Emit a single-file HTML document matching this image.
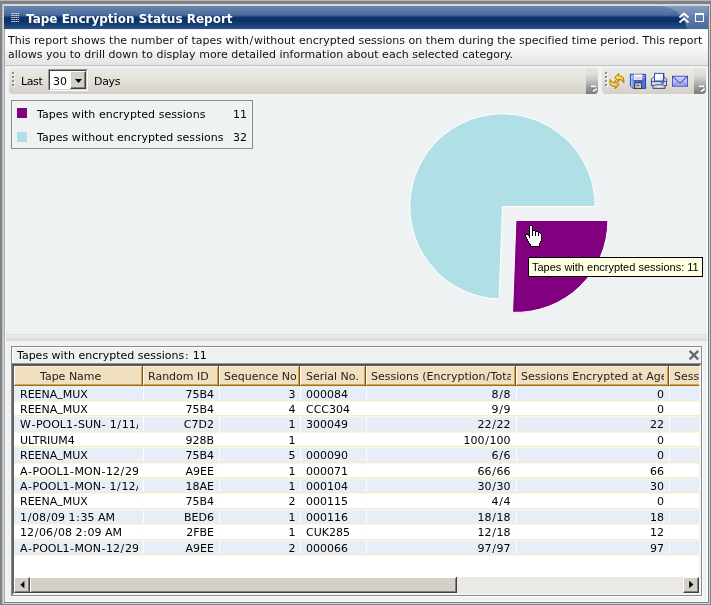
<!DOCTYPE html>
<html>
<head>
<meta charset="utf-8">
<title>Tape Encryption Status Report</title>
<style>
html,body{margin:0;padding:0;}
body{width:711px;height:605px;overflow:hidden;position:relative;background:#7e8186;font-family:"DejaVu Sans","Liberation Sans",sans-serif;font-size:11px;color:#000;}
.abs{position:absolute;}
.t,#titletext,#desctext,.lbl,.v,.lt,.ln,#tip span,#ptitle,.ht,.c{will-change:transform;}
#topline{left:0;top:0;width:711px;height:1px;background:#b5b7b9;}
#frame{left:3px;top:4px;width:707px;height:600px;background:#d6d5d2;}
#frame2{left:4px;top:6px;width:705px;height:597px;background:#777b81;}
#inner{left:4px;top:6px;width:704px;height:596px;background:#eef2f3;overflow:hidden;}
/* title */
#title{left:0;top:0;width:704px;height:23px;background:linear-gradient(#6886b0 0px,#4a6c9d 8.9px,#0c346b 11.6px,#0a3269 15px,#2b5287 23px);}
#titletext{left:21.5px;top:5px;font-weight:bold;font-size:12px;color:#fff;white-space:nowrap;line-height:16px;}
/* description */
#desc{left:0;top:24px;width:704px;height:35px;border-radius:4px 4px 0 0;background:linear-gradient(#ffffff 0,#fbfbfb 14px,#e4e4e4 35px);}
#desctext{left:3.9px;top:4.1px;line-height:13.7px;white-space:nowrap;color:#111;letter-spacing:0.018px;}
/* toolbars */
.tb{top:62px;height:26px;border-radius:4px;background:linear-gradient(#eceae4 0,#e3e1da 12px,#d3d0c7 26px);}
#tb1{left:5px;width:589px;}
#tb2{left:598px;width:104px;}
.ovf{top:0;right:0;width:12px;height:26px;border-radius:0 2px 4px 0;background:linear-gradient(#e6e4de 0,#e0ded8 6px,#d0cfcb 10px,#b5b5b3 15px,#979796 20px,#7b7b7b 26px);}
.lbl{top:7px;line-height:14px;white-space:nowrap;}
#combo{left:39px;top:1px;width:40px;height:22px;box-sizing:border-box;border:1px solid;border-color:#9c9c9c #fff #fff #9c9c9c;background:#fff;}
#combo .in{left:0;top:0;width:38px;height:20px;box-sizing:border-box;border:1px solid;border-color:#404040 #d4d0c8 #d4d0c8 #404040;background:#fff;}
#combo .v{left:3.4px;top:4px;line-height:14px;}
#combo .btn{left:20px;top:0;width:16px;height:18px;box-sizing:border-box;background:#d4d0c8;border:1px solid;border-color:#fff #404040 #404040 #fff;box-shadow:inset -1px -1px 0 #808080;}
/* chart area */
#legend{left:7px;top:94px;width:242px;height:49px;box-sizing:border-box;border:1px solid #8a8a8a;}
.sw{left:5px;width:10px;height:10px;}
.lt{left:25px;white-space:nowrap;line-height:14px;letter-spacing:0.04px;}
.ln{left:221px;white-space:nowrap;line-height:14px;}
#tip{left:524px;top:251px;width:175px;height:20px;box-sizing:border-box;border:1px solid #000;background:#ffffe1;font-family:"Liberation Sans",sans-serif;font-size:11px;line-height:14px;white-space:nowrap;}
/* splitter */
#split{left:1px;top:328px;width:703px;height:7px;background:linear-gradient(#dcdcdc 0,#e9e9e9 1.5px,#e4e4e4 4px,#d6d6d6 7px);}
#lower{left:0;top:335px;width:704px;height:261px;background:#eef2f3;}
#panel{left:7px;top:340px;width:691px;height:250px;box-sizing:border-box;border:1px solid #8c8c8c;background:#eef2f3;box-shadow:inset 1px 1px 0 #fff, 1px 1px 0 #fff;}
#ptitle{left:5px;top:2px;line-height:14px;white-space:nowrap;}
#grid{left:0;top:17px;width:689px;height:231px;box-sizing:border-box;border:2px solid;border-color:#565656 #f4f4f4 #f4f4f4 #626262;background:#fff;overflow:hidden;box-shadow:0 -1px 0 #949494;}
.hc{top:0;height:20px;box-sizing:border-box;background:#f1e0c0;border-bottom:1px solid #947030;border-right:1px solid #735214;box-shadow:inset 1px 0 0 #fff, inset 0 1px 0 #fbf3e0, inset -1px 0 0 #d9a444, inset 0 -1px 0 #d9a23c;line-height:14px;white-space:nowrap;overflow:hidden;color:#222;}
.row{left:0;width:685px;height:15px;}
.vs{top:0;width:1px;height:100%;background:#fdfdfd;}
.ht{top:3.5px;line-height:14px;overflow:hidden;white-space:nowrap;height:14px;}
.row.a{background:#e8eef7;}
.row .ln2{left:0;bottom:0;width:685px;height:2px;background:linear-gradient(#f5eccd 0,#f5eccd 1px,#faf5e5 1px,#faf5e5 2px);}
.c{top:1.6px;line-height:14px;white-space:nowrap;overflow:hidden;height:17px;}
.r{text-align:right;}
i.us{font-style:normal;position:relative;top:-1.6px;}
i.w1{font-style:normal;padding:0 0.5px;}
i.w2{font-style:normal;padding:0 0.65px;}
/* scrollbar */
#sb{left:0;top:211px;width:685px;height:16px;background:#ebe9e4;}
#sbthumb{left:16px;top:0;width:427px;height:16px;background:#d4d0c8;box-shadow:inset -1px -1px 0 #404040, inset 1px 1px 0 #fff, inset -2px -2px 0 #808080;}
.sbb{top:0;width:16px;height:16px;box-sizing:border-box;background:#d4d0c8;border:1px solid;border-color:#fff #404040 #404040 #fff;box-shadow:inset -1px -1px 0 #808080;}
</style>
</head>
<body>
<div class="abs" id="topline"></div>
<div class="abs" id="frame"></div>
<div class="abs" id="frame2"></div>
<div class="abs" style="left:2px;top:4px;width:1px;height:600px;background:#b9babb"></div>
<div class="abs" id="inner">
  <div class="abs" id="title">
    <svg class="abs" style="left:0;top:0" width="704" height="23" viewBox="0 0 704 23">
      <defs>
        <linearGradient id="gl" x1="0" y1="0" x2="0" y2="1"><stop offset="0" stop-color="#869fc1"/><stop offset="1" stop-color="#496b9c"/></linearGradient>
      </defs>
      <path d="M655 0 C672 1 680 10 683 23 L704 23 L704 0 Z" fill="url(#gl)" opacity="0.9"/>
      <g fill="#c9d5e9"><rect x="7.2" y="7" width="1.6" height="1"/><rect x="9.3" y="7" width="1.6" height="1"/><rect x="11.4" y="7" width="1.6" height="1"/><rect x="13.5" y="7" width="1.6" height="1"/><rect x="7.2" y="9" width="1.6" height="1"/><rect x="9.3" y="9" width="1.6" height="1"/><rect x="11.4" y="9" width="1.6" height="1"/><rect x="13.5" y="9" width="1.6" height="1"/><rect x="7.2" y="11" width="1.6" height="1"/><rect x="9.3" y="11" width="1.6" height="1"/><rect x="11.4" y="11" width="1.6" height="1"/><rect x="13.5" y="11" width="1.6" height="1"/><rect x="7.2" y="13" width="1.6" height="1"/><rect x="9.3" y="13" width="1.6" height="1"/><rect x="11.4" y="13" width="1.6" height="1"/><rect x="13.5" y="13" width="1.6" height="1"/><rect x="7.2" y="15" width="1.6" height="1"/><rect x="9.3" y="15" width="1.6" height="1"/><rect x="11.4" y="15" width="1.6" height="1"/><rect x="13.5" y="15" width="1.6" height="1"/></g>
      <g stroke="#fff" stroke-width="1.8" fill="none" stroke-linejoin="miter">
        <path d="M675.5 11.5 L680 7.5 L684.5 11.5"/>
        <path d="M675.5 16.5 L680 12.5 L684.5 16.5"/>
      </g>
      <rect x="691.5" y="7.5" width="8" height="8" fill="none" stroke="#fff" stroke-width="1"/>
      <rect x="691" y="7" width="9" height="2" fill="#fff"/>
    </svg>
    <div class="abs" id="titletext">Tape Encryption Status Report</div>
  </div>
  <div class="abs" id="desc">
    <div class="abs" id="desctext">This report shows the number of tapes with<i class="w2">/</i>without encrypted sessions on them during the specified time period. This report<br>allows you to drill down to display more detailed information about each selected category.</div>
  </div>
  <div class="abs" style="left:0;top:59px;width:704px;height:1px;background:#c6c6c6"></div>

  <div class="abs tb" id="tb1">
    <svg class="abs" style="left:3px;top:4px" width="4" height="16"><rect x="1" y="1" width="2" height="2" fill="#fff"/><rect x="0" y="0" width="2" height="2" fill="#8d8d89"/><rect x="1" y="5" width="2" height="2" fill="#fff"/><rect x="0" y="4" width="2" height="2" fill="#8d8d89"/><rect x="1" y="9" width="2" height="2" fill="#fff"/><rect x="0" y="8" width="2" height="2" fill="#8d8d89"/><rect x="1" y="13" width="2" height="2" fill="#fff"/><rect x="0" y="12" width="2" height="2" fill="#8d8d89"/></svg>
    <div class="abs lbl" style="left:12.3px;letter-spacing:-0.4px">Last</div>
    <div class="abs" id="combo"><div class="abs in"><div class="abs v">30</div><div class="abs btn"><svg class="abs" style="left:4px;top:7px" width="7" height="4"><path d="M0 0h7L3.5 4z" fill="#000"/></svg></div></div></div>
    <div class="abs lbl" style="left:85px;letter-spacing:-0.3px">Days</div>
    <div class="abs ovf"><svg class="abs" style="left:0.9px;top:0" width="12" height="26"><rect x="4" y="17.6" width="5.2" height="1.4" fill="#fff"/><path d="M5.9 23.2 L9.8 20.9" stroke="#fff" stroke-width="1.6" fill="none"/><path d="M4.2 20.2 h3.6 l-2 2z" fill="#767676"/></svg></div>
  </div>
  <div class="abs tb" id="tb2">
    <svg class="abs" style="left:0;top:0" width="105" height="26" viewBox="602 68 105 26">
      <defs>
        <linearGradient id="gold" x1="0" y1="0" x2="1" y2="1"><stop offset="0" stop-color="#fffce0"/><stop offset="0.4" stop-color="#ffe468"/><stop offset="1" stop-color="#eeae1c"/></linearGradient>
        <linearGradient id="fblue" x1="0" y1="0" x2="1" y2="0"><stop offset="0" stop-color="#90acf2"/><stop offset="0.5" stop-color="#6485e2"/><stop offset="1" stop-color="#4a6dd6"/></linearGradient>
        <linearGradient id="flabel" x1="0" y1="0" x2="0" y2="1"><stop offset="0" stop-color="#fafafa"/><stop offset="1" stop-color="#c4c6c8"/></linearGradient>
        <linearGradient id="fshut" x1="0" y1="0" x2="1" y2="1"><stop offset="0" stop-color="#9a9a9a"/><stop offset="1" stop-color="#d6d6d6"/></linearGradient>
        <linearGradient id="paper" x1="0" y1="0" x2="1" y2="1"><stop offset="0" stop-color="#ffffff"/><stop offset="0.55" stop-color="#f4f8ff"/><stop offset="1" stop-color="#b8d4f8"/></linearGradient>
        <linearGradient id="pbody" x1="0" y1="0" x2="0" y2="1"><stop offset="0" stop-color="#f4f4fb"/><stop offset="1" stop-color="#c6c6de"/></linearGradient>
        <linearGradient id="mail" x1="0" y1="0" x2="0" y2="1"><stop offset="0" stop-color="#d4d4ff"/><stop offset="1" stop-color="#a4a4f6"/></linearGradient>
      </defs>
      <!-- refresh -->
      <g stroke="#bd8408" stroke-width="1.1" stroke-linejoin="round" fill="url(#gold)">
        <path d="M615 77.6 L618.7 73.7 L618.7 76 C621.4 76 623.8 77 623.8 80 L623.8 82.7 C622.8 80.4 621.4 79.4 618.7 79.4 L618.7 81.6 Z"/>
        <path d="M618.9 84.6 L615.2 88.5 L615.2 86.2 C612.5 86.2 610.1 85.2 610.1 82.2 L610.1 79.5 C611.1 81.8 612.5 82.8 615.2 82.8 L615.2 80.6 Z"/>
      </g>
      <!-- save -->
      <path d="M630.4 74.3 H645.6 V88.4 H633.2 L630.4 86 Z" fill="url(#fblue)" stroke="#1c42b4" stroke-width="1"/>
      <path d="M631.4 87 V75.3 H644.6" fill="none" stroke="#a9bdf5" stroke-width="0.9"/>
      <rect x="633.6" y="79.6" width="9" height="1.8" fill="#2a50c2"/>
      <rect x="634.3" y="74.9" width="7.6" height="4.8" fill="url(#flabel)" stroke="#fff" stroke-width="0.7"/>
      <rect x="634.6" y="82.6" width="7" height="6" fill="url(#fshut)" stroke="#343434" stroke-width="0.9"/>
      <rect x="636.9" y="84.9" width="2.2" height="1.2" fill="#3c6ae0"/>
      <rect x="631.7" y="77" width="1" height="1" fill="#e8eeff"/><rect x="643.3" y="77" width="1" height="1" fill="#e8eeff"/>
      <!-- printer -->
      <path d="M651.4 79.2 L653.4 77.2 H664.6 L666.6 79.2 V85.6 H665 V88.4 H653 V85.6 H651.4 Z" fill="url(#pbody)" stroke="#42427e" stroke-width="1"/>
      <path d="M651.6 81.6 H666.4" stroke="#42427e" stroke-width="1"/>
      <path d="M653.2 85.6 C655 84.4 663 84.4 664.8 85.6" stroke="#42427e" stroke-width="0.9" fill="none"/>
      <rect x="657" y="86.2" width="4" height="1" fill="#fff"/>
      <rect x="654.5" y="73.4" width="9.2" height="7.6" fill="url(#paper)" stroke="#2a56c8" stroke-width="1"/>
      <path d="M663.7 73.4 V81" stroke="#34349c" stroke-width="1"/>
      <rect x="660.8" y="81.9" width="1.7" height="2" fill="#3cc01c"/><rect x="662.5" y="81.9" width="1.4" height="2" fill="#2a62e0"/>
      <!-- mail -->
      <rect x="672.5" y="76.3" width="15" height="9.9" fill="url(#mail)" stroke="#4e4ed2" stroke-width="1"/>
      <path d="M673.3 86 L677.6 82 M687 86 L682.7 82" stroke="#4c86e6" stroke-width="0.9" fill="none"/>
      <path d="M672.8 76.4 L680 83.4 L687.2 76.4" stroke="#30305e" stroke-width="1" fill="none"/>
    </svg>
    <svg class="abs" style="left:3px;top:4px" width="4" height="16"><rect x="1" y="1" width="2" height="2" fill="#fff"/><rect x="0" y="0" width="2" height="2" fill="#8d8d89"/><rect x="1" y="5" width="2" height="2" fill="#fff"/><rect x="0" y="4" width="2" height="2" fill="#8d8d89"/><rect x="1" y="9" width="2" height="2" fill="#fff"/><rect x="0" y="8" width="2" height="2" fill="#8d8d89"/><rect x="1" y="13" width="2" height="2" fill="#fff"/><rect x="0" y="12" width="2" height="2" fill="#8d8d89"/></svg>
    <div class="abs ovf"><svg class="abs" style="left:0.9px;top:0" width="12" height="26"><rect x="4" y="17.6" width="5.2" height="1.4" fill="#fff"/><path d="M5.9 23.2 L9.8 20.9" stroke="#fff" stroke-width="1.6" fill="none"/><path d="M4.2 20.2 h3.6 l-2 2z" fill="#767676"/></svg></div>
  </div>

  <div class="abs" id="legend">
    <div class="abs sw" style="top:7px;background:#800080"></div>
    <div class="abs lt" style="top:7px">Tapes with encrypted sessions</div>
    <div class="abs ln" style="top:7px">11</div>
    <div class="abs sw" style="top:31px;background:#b0e0e6"></div>
    <div class="abs lt" style="top:30px">Tapes without encrypted sessions</div>
    <div class="abs ln" style="top:30px">32</div>
  </div>

  <svg class="abs" style="left:0;top:88px" width="704" height="240" viewBox="4 94 704 240">
    <path id="pb" d="M502.5 206.5 L595.2 206.5 A92.7 92.7 0 1 0 499.11 299.14 Z" fill="#b0e0e6" stroke="#fff" stroke-width="1"/>
    <path id="pp" d="M515.9 220.4 L607.9 220.4 A92 92 0 0 1 512.54 312.34 Z" fill="#800080" stroke="#fff" stroke-width="1"/>
  </svg>
  <svg class="abs" id="cursor" style="left:521px;top:219px" width="17" height="22" shape-rendering="crispEdges"><rect x="5" y="0" width="2" height="1" fill="#000"/><rect x="4" y="1" width="1" height="1" fill="#000"/><rect x="5" y="1" width="2" height="1" fill="#fff"/><rect x="7" y="1" width="1" height="1" fill="#000"/><rect x="4" y="2" width="1" height="1" fill="#000"/><rect x="5" y="2" width="2" height="1" fill="#fff"/><rect x="7" y="2" width="1" height="1" fill="#000"/><rect x="4" y="3" width="1" height="1" fill="#000"/><rect x="5" y="3" width="2" height="1" fill="#fff"/><rect x="7" y="3" width="1" height="1" fill="#000"/><rect x="4" y="4" width="1" height="1" fill="#000"/><rect x="5" y="4" width="2" height="1" fill="#fff"/><rect x="7" y="4" width="1" height="1" fill="#000"/><rect x="4" y="5" width="1" height="1" fill="#000"/><rect x="5" y="5" width="2" height="1" fill="#fff"/><rect x="7" y="5" width="3" height="1" fill="#000"/><rect x="4" y="6" width="1" height="1" fill="#000"/><rect x="5" y="6" width="2" height="1" fill="#fff"/><rect x="7" y="6" width="1" height="1" fill="#000"/><rect x="8" y="6" width="2" height="1" fill="#fff"/><rect x="10" y="6" width="3" height="1" fill="#000"/><rect x="4" y="7" width="1" height="1" fill="#000"/><rect x="5" y="7" width="2" height="1" fill="#fff"/><rect x="7" y="7" width="1" height="1" fill="#000"/><rect x="8" y="7" width="2" height="1" fill="#fff"/><rect x="10" y="7" width="1" height="1" fill="#000"/><rect x="11" y="7" width="2" height="1" fill="#fff"/><rect x="13" y="7" width="2" height="1" fill="#000"/><rect x="4" y="8" width="1" height="1" fill="#000"/><rect x="5" y="8" width="2" height="1" fill="#fff"/><rect x="7" y="8" width="1" height="1" fill="#000"/><rect x="8" y="8" width="2" height="1" fill="#fff"/><rect x="10" y="8" width="1" height="1" fill="#000"/><rect x="11" y="8" width="2" height="1" fill="#fff"/><rect x="13" y="8" width="1" height="1" fill="#000"/><rect x="14" y="8" width="1" height="1" fill="#fff"/><rect x="15" y="8" width="1" height="1" fill="#000"/><rect x="0" y="9" width="3" height="1" fill="#000"/><rect x="4" y="9" width="1" height="1" fill="#000"/><rect x="5" y="9" width="2" height="1" fill="#fff"/><rect x="7" y="9" width="1" height="1" fill="#000"/><rect x="8" y="9" width="2" height="1" fill="#fff"/><rect x="10" y="9" width="1" height="1" fill="#000"/><rect x="11" y="9" width="2" height="1" fill="#fff"/><rect x="13" y="9" width="1" height="1" fill="#000"/><rect x="14" y="9" width="2" height="1" fill="#fff"/><rect x="16" y="9" width="1" height="1" fill="#000"/><rect x="0" y="10" width="1" height="1" fill="#000"/><rect x="1" y="10" width="2" height="1" fill="#fff"/><rect x="3" y="10" width="2" height="1" fill="#000"/><rect x="5" y="10" width="2" height="1" fill="#fff"/><rect x="7" y="10" width="1" height="1" fill="#000"/><rect x="8" y="10" width="2" height="1" fill="#fff"/><rect x="10" y="10" width="1" height="1" fill="#000"/><rect x="11" y="10" width="2" height="1" fill="#fff"/><rect x="13" y="10" width="1" height="1" fill="#000"/><rect x="14" y="10" width="2" height="1" fill="#fff"/><rect x="16" y="10" width="1" height="1" fill="#000"/><rect x="0" y="11" width="1" height="1" fill="#000"/><rect x="1" y="11" width="3" height="1" fill="#fff"/><rect x="4" y="11" width="1" height="1" fill="#000"/><rect x="5" y="11" width="11" height="1" fill="#fff"/><rect x="16" y="11" width="1" height="1" fill="#000"/><rect x="1" y="12" width="1" height="1" fill="#000"/><rect x="2" y="12" width="2" height="1" fill="#fff"/><rect x="4" y="12" width="1" height="1" fill="#000"/><rect x="5" y="12" width="11" height="1" fill="#fff"/><rect x="16" y="12" width="1" height="1" fill="#000"/><rect x="1" y="13" width="1" height="1" fill="#000"/><rect x="2" y="13" width="14" height="1" fill="#fff"/><rect x="16" y="13" width="1" height="1" fill="#000"/><rect x="2" y="14" width="1" height="1" fill="#000"/><rect x="3" y="14" width="13" height="1" fill="#fff"/><rect x="16" y="14" width="1" height="1" fill="#000"/><rect x="2" y="15" width="1" height="1" fill="#000"/><rect x="3" y="15" width="13" height="1" fill="#fff"/><rect x="16" y="15" width="1" height="1" fill="#000"/><rect x="3" y="16" width="1" height="1" fill="#000"/><rect x="4" y="16" width="11" height="1" fill="#fff"/><rect x="15" y="16" width="1" height="1" fill="#000"/><rect x="3" y="17" width="1" height="1" fill="#000"/><rect x="4" y="17" width="11" height="1" fill="#fff"/><rect x="15" y="17" width="1" height="1" fill="#000"/><rect x="4" y="18" width="1" height="1" fill="#000"/><rect x="5" y="18" width="9" height="1" fill="#fff"/><rect x="14" y="18" width="1" height="1" fill="#000"/><rect x="5" y="19" width="1" height="1" fill="#000"/><rect x="6" y="19" width="8" height="1" fill="#fff"/><rect x="14" y="19" width="1" height="1" fill="#000"/><rect x="5" y="20" width="1" height="1" fill="#000"/><rect x="6" y="20" width="8" height="1" fill="#fff"/><rect x="14" y="20" width="1" height="1" fill="#000"/><rect x="5" y="21" width="10" height="1" fill="#000"/></svg>
  <div class="abs" id="tip"><span class="abs" style="left:3.2px;top:2px">Tapes with encrypted sessions: 11</span></div>

  <div class="abs" id="split"></div>
  <div class="abs" id="lower"></div>
  <div class="abs" id="panel">
    <svg class="abs" style="left:676px;top:2.2px" width="12" height="12" viewBox="0 0 12 12"><path d="M1.6 1.9 L10.2 10.4 M10.2 1.9 L1.6 10.4" stroke="#6a6a6a" stroke-width="2.3" fill="none"/></svg>
    <div class="abs" id="ptitle">Tapes with encrypted sessions<i class="w2">:</i> 11</div>
    <div class="abs" id="grid">
<!--ROWS-->
      <div class="abs hc" style="left:0px;width:129px"><span class="abs ht" style="left:26px;width:98px">Tape Name</span></div>
      <div class="abs hc" style="left:129px;width:76px"><span class="abs ht" style="left:5.2px;width:65px">Random ID</span></div>
      <div class="abs hc" style="left:205px;width:81px"><span class="abs ht" style="left:5px;width:73px">Sequence No.</span></div>
      <div class="abs hc" style="left:286px;width:66px"><span class="abs ht" style="left:5.5px;width:55px">Serial No.</span></div>
      <div class="abs hc" style="left:352px;width:150px"><span class="abs ht" style="left:4.5px;width:140px">Sessions (Encryption<i class="w2">/</i>Total)</span></div>
      <div class="abs hc" style="left:502px;width:153px"><span class="abs ht" style="left:5px;width:143px">Sessions Encrypted at Agent</span></div>
      <div class="abs hc" style="left:655px;width:160px"><span class="abs ht" style="left:5px;width:150px">Sessions Encrypted at Server</span></div>
      <div class="abs row a" style="top:20px;height:16px"><i class="abs vs" style="left:129px"></i><i class="abs vs" style="left:205px"></i><i class="abs vs" style="left:286px"></i><i class="abs vs" style="left:352px"></i><i class="abs vs" style="left:502px"></i><i class="abs vs" style="left:655px"></i><span class="abs c k" style="top:1.6px;left:6px;width:118px">REENA<i class="us">_</i>MUX</span><span class="abs c r" style="top:1.6px;left:129px;width:71px">75B4</span><span class="abs c r" style="top:1.6px;left:205px;width:76.5px">3</span><span class="abs c k" style="top:1.6px;left:292px;width:55px">000084</span><span class="abs c r" style="top:1.6px;left:352px;width:144.5px">8<i class="w2">/</i>8</span><span class="abs c r" style="top:1.6px;left:502px;width:148px">0</span><i class="abs ln2"></i></div>
      <div class="abs row" style="top:36px;height:15px"><i class="abs vs" style="left:129px"></i><i class="abs vs" style="left:205px"></i><i class="abs vs" style="left:286px"></i><i class="abs vs" style="left:352px"></i><i class="abs vs" style="left:502px"></i><i class="abs vs" style="left:655px"></i><span class="abs c k" style="top:1.0px;left:6px;width:118px">REENA<i class="us">_</i>MUX</span><span class="abs c r" style="top:1.0px;left:129px;width:71px">75B4</span><span class="abs c r" style="top:1.0px;left:205px;width:76.5px">4</span><span class="abs c k" style="top:1.0px;left:292px;width:55px">CCC304</span><span class="abs c r" style="top:1.0px;left:352px;width:144.5px">9<i class="w2">/</i>9</span><span class="abs c r" style="top:1.0px;left:502px;width:148px">0</span><i class="abs ln2"></i></div>
      <div class="abs row a" style="top:51px;height:16px"><i class="abs vs" style="left:129px"></i><i class="abs vs" style="left:205px"></i><i class="abs vs" style="left:286px"></i><i class="abs vs" style="left:352px"></i><i class="abs vs" style="left:502px"></i><i class="abs vs" style="left:655px"></i><span class="abs c k" style="top:1.4px;left:6px;width:118px">W<i class="w1">-</i>POOL1<i class="w1">-</i>SUN<i class="w1">-</i> 1<i class="w2">/</i>11<i class="w2">/</i>09</span><span class="abs c r" style="top:1.4px;left:129px;width:71px">C7D2</span><span class="abs c r" style="top:1.4px;left:205px;width:76.5px">1</span><span class="abs c k" style="top:1.4px;left:292px;width:55px">300049</span><span class="abs c r" style="top:1.4px;left:352px;width:144.5px">22<i class="w2">/</i>22</span><span class="abs c r" style="top:1.4px;left:502px;width:148px">22</span><i class="abs ln2"></i></div>
      <div class="abs row" style="top:67px;height:15px"><i class="abs vs" style="left:129px"></i><i class="abs vs" style="left:205px"></i><i class="abs vs" style="left:286px"></i><i class="abs vs" style="left:352px"></i><i class="abs vs" style="left:502px"></i><i class="abs vs" style="left:655px"></i><span class="abs c k" style="top:0.8px;left:6px;width:118px">ULTRIUM4</span><span class="abs c r" style="top:0.8px;left:129px;width:71px">928B</span><span class="abs c r" style="top:0.8px;left:205px;width:76.5px">1</span><span class="abs c k" style="top:0.8px;left:292px;width:55px"></span><span class="abs c r" style="top:0.8px;left:352px;width:144.5px">100<i class="w2">/</i>100</span><span class="abs c r" style="top:0.8px;left:502px;width:148px">0</span><i class="abs ln2"></i></div>
      <div class="abs row a" style="top:82px;height:16px"><i class="abs vs" style="left:129px"></i><i class="abs vs" style="left:205px"></i><i class="abs vs" style="left:286px"></i><i class="abs vs" style="left:352px"></i><i class="abs vs" style="left:502px"></i><i class="abs vs" style="left:655px"></i><span class="abs c k" style="top:1.2px;left:6px;width:118px">REENA<i class="us">_</i>MUX</span><span class="abs c r" style="top:1.2px;left:129px;width:71px">75B4</span><span class="abs c r" style="top:1.2px;left:205px;width:76.5px">5</span><span class="abs c k" style="top:1.2px;left:292px;width:55px">000090</span><span class="abs c r" style="top:1.2px;left:352px;width:144.5px">6<i class="w2">/</i>6</span><span class="abs c r" style="top:1.2px;left:502px;width:148px">0</span><i class="abs ln2"></i></div>
      <div class="abs row" style="top:98px;height:15px"><i class="abs vs" style="left:129px"></i><i class="abs vs" style="left:205px"></i><i class="abs vs" style="left:286px"></i><i class="abs vs" style="left:352px"></i><i class="abs vs" style="left:502px"></i><i class="abs vs" style="left:655px"></i><span class="abs c k" style="top:0.6px;left:6px;width:118px">A<i class="w1">-</i>POOL1<i class="w1">-</i>MON<i class="w1">-</i>12<i class="w2">/</i>29<i class="w2">/</i>08</span><span class="abs c r" style="top:0.6px;left:129px;width:71px">A9EE</span><span class="abs c r" style="top:0.6px;left:205px;width:76.5px">1</span><span class="abs c k" style="top:0.6px;left:292px;width:55px">000071</span><span class="abs c r" style="top:0.6px;left:352px;width:144.5px">66<i class="w2">/</i>66</span><span class="abs c r" style="top:0.6px;left:502px;width:148px">66</span><i class="abs ln2"></i></div>
      <div class="abs row a" style="top:113px;height:15px"><i class="abs vs" style="left:129px"></i><i class="abs vs" style="left:205px"></i><i class="abs vs" style="left:286px"></i><i class="abs vs" style="left:352px"></i><i class="abs vs" style="left:502px"></i><i class="abs vs" style="left:655px"></i><span class="abs c k" style="top:1.0px;left:6px;width:118px">A<i class="w1">-</i>POOL1<i class="w1">-</i>MON<i class="w1">-</i> 1<i class="w2">/</i>12<i class="w2">/</i>09</span><span class="abs c r" style="top:1.0px;left:129px;width:71px">18AE</span><span class="abs c r" style="top:1.0px;left:205px;width:76.5px">1</span><span class="abs c k" style="top:1.0px;left:292px;width:55px">000104</span><span class="abs c r" style="top:1.0px;left:352px;width:144.5px">30<i class="w2">/</i>30</span><span class="abs c r" style="top:1.0px;left:502px;width:148px">30</span><i class="abs ln2"></i></div>
      <div class="abs row" style="top:128px;height:16px"><i class="abs vs" style="left:129px"></i><i class="abs vs" style="left:205px"></i><i class="abs vs" style="left:286px"></i><i class="abs vs" style="left:352px"></i><i class="abs vs" style="left:502px"></i><i class="abs vs" style="left:655px"></i><span class="abs c k" style="top:1.4px;left:6px;width:118px">REENA<i class="us">_</i>MUX</span><span class="abs c r" style="top:1.4px;left:129px;width:71px">75B4</span><span class="abs c r" style="top:1.4px;left:205px;width:76.5px">2</span><span class="abs c k" style="top:1.4px;left:292px;width:55px">000115</span><span class="abs c r" style="top:1.4px;left:352px;width:144.5px">4<i class="w2">/</i>4</span><span class="abs c r" style="top:1.4px;left:502px;width:148px">0</span><i class="abs ln2"></i></div>
      <div class="abs row a" style="top:144px;height:15px"><i class="abs vs" style="left:129px"></i><i class="abs vs" style="left:205px"></i><i class="abs vs" style="left:286px"></i><i class="abs vs" style="left:352px"></i><i class="abs vs" style="left:502px"></i><i class="abs vs" style="left:655px"></i><span class="abs c k" style="top:0.8px;left:6px;width:118px">1<i class="w2">/</i>08<i class="w2">/</i>09 1<i class="w2">:</i>35 AM</span><span class="abs c r" style="top:0.8px;left:129px;width:71px">BED6</span><span class="abs c r" style="top:0.8px;left:205px;width:76.5px">1</span><span class="abs c k" style="top:0.8px;left:292px;width:55px">000116</span><span class="abs c r" style="top:0.8px;left:352px;width:144.5px">18<i class="w2">/</i>18</span><span class="abs c r" style="top:0.8px;left:502px;width:148px">18</span><i class="abs ln2"></i></div>
      <div class="abs row" style="top:159px;height:16px"><i class="abs vs" style="left:129px"></i><i class="abs vs" style="left:205px"></i><i class="abs vs" style="left:286px"></i><i class="abs vs" style="left:352px"></i><i class="abs vs" style="left:502px"></i><i class="abs vs" style="left:655px"></i><span class="abs c k" style="top:1.2px;left:6px;width:118px">12<i class="w2">/</i>06<i class="w2">/</i>08 2<i class="w2">:</i>09 AM</span><span class="abs c r" style="top:1.2px;left:129px;width:71px">2FBE</span><span class="abs c r" style="top:1.2px;left:205px;width:76.5px">1</span><span class="abs c k" style="top:1.2px;left:292px;width:55px">CUK285</span><span class="abs c r" style="top:1.2px;left:352px;width:144.5px">12<i class="w2">/</i>18</span><span class="abs c r" style="top:1.2px;left:502px;width:148px">12</span><i class="abs ln2"></i></div>
      <div class="abs row a" style="top:175px;height:15px"><i class="abs vs" style="left:129px"></i><i class="abs vs" style="left:205px"></i><i class="abs vs" style="left:286px"></i><i class="abs vs" style="left:352px"></i><i class="abs vs" style="left:502px"></i><i class="abs vs" style="left:655px"></i><span class="abs c k" style="top:0.6px;left:6px;width:118px">A<i class="w1">-</i>POOL1<i class="w1">-</i>MON<i class="w1">-</i>12<i class="w2">/</i>29<i class="w2">/</i>08</span><span class="abs c r" style="top:0.6px;left:129px;width:71px">A9EE</span><span class="abs c r" style="top:0.6px;left:205px;width:76.5px">2</span><span class="abs c k" style="top:0.6px;left:292px;width:55px">000066</span><span class="abs c r" style="top:0.6px;left:352px;width:144.5px">97<i class="w2">/</i>97</span><span class="abs c r" style="top:0.6px;left:502px;width:148px">97</span><i class="abs ln2"></i></div>
<!--/ROWS-->
      <div class="abs" id="sb"><div class="abs" id="sbthumb"></div><div class="abs sbb" style="left:0"><svg class="abs" style="left:-1px;top:-1px" width="16" height="15"><path d="M10.4 3.9 L10.4 11.5 L6.4 7.7 Z" fill="#000"/></svg></div><div class="abs sbb" style="right:0"><svg class="abs" style="left:-1px;top:-1px" width="16" height="15"><path d="M6.2 3.7 L6.2 11.3 L10.4 7.5 Z" fill="#000"/></svg></div></div>
    </div>
  </div>
  <div class="abs" style="left:0;top:23px;width:1px;height:573px;background:#a4a6a8"></div>
  <div class="abs" style="left:1px;top:60px;width:1px;height:536px;background:#fbfcfc"></div>
  <div class="abs" style="left:703px;top:60px;width:1px;height:536px;background:#fbfcfc"></div>
  <div class="abs" style="left:1px;top:595px;width:703px;height:1px;background:#fbfcfc"></div>
</div>
</body>
</html>
